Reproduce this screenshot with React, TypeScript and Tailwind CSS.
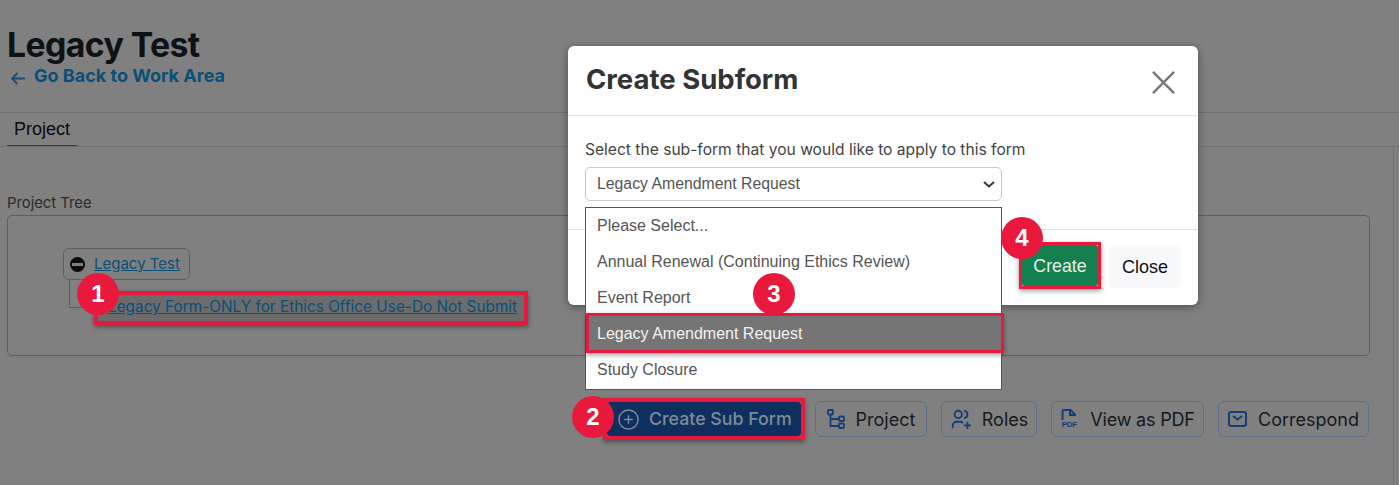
import { CirclePlus } from 'lucide-react';
import { TbUsersPlus } from 'react-icons/tb';
import type { ReactNode } from 'react';

const dm = "font-['Inter','Liberation_Sans',sans-serif]";
const arial = "font-['Liberation_Sans',Arial,sans-serif]";

function Badge({ n, className }: { n: number; className: string }) {
  return (
    <span className={`absolute z-30 flex h-[42px] w-[42px] items-center justify-center rounded-full bg-[#e8193c] text-[24px] font-bold text-white ${arial} ${className}`}>
      {n}
    </span>
  );
}

function ToolButton({ icon, label, className }: { icon: ReactNode; label: string; className: string }) {
  return (
    <button type="button" className={`flex h-[36px] items-center justify-center rounded-[6px] border border-[#5c6f86] text-[18px] text-[#15191f] ${className}`}>
      {icon}
      <span>{label}</span>
    </button>
  );
}

const TreeIcon = () => (
  <svg width="18" height="20" viewBox="0 0 18 20" fill="none" stroke="#123f78" strokeWidth="1.800">
    <rect x="1" y="1" width="5" height="4.500" rx="1" />
    <rect x="12" y="7.500" width="5" height="4.500" rx="1" />
    <rect x="12" y="14.500" width="5" height="4.500" rx="1" />
    <path d="M3.500 6v11h8.500M3.500 10h8.500" />
  </svg>
);

const PdfIcon = () => (
  <span className="flex h-[20px] w-[18px] flex-col items-center">
    <svg width="16" height="11" viewBox="0 0 16 11" fill="none" stroke="#123f78" strokeWidth="2">
      <path d="M1.500 11V2a1 1 0 0 1 1-1h7l4.500 4.500V7M9 1v5h5" />
    </svg>
    <span className={`text-[8px] leading-[9px] font-bold text-[#123f78] ${arial}`}>PDF</span>
  </span>
);

const MailIcon = () => (
  <svg width="19" height="16" viewBox="0 0 19 16" fill="none" stroke="#123f78" strokeWidth="2">
    <rect x="1" y="1" width="17" height="14" rx="2" />
    <path d="M5 5l4.500 3.500L14 5" />
  </svg>
);

export default function App() {
  const options = ['Please Select...', 'Annual Renewal (Continuing Ethics Review)', 'Event Report'];

  return (
    <div className={`relative h-[485px] w-[1399px] overflow-hidden bg-[#808080] ${dm}`}>
      <div className="pl-[7px] pt-[24px]">
        <h1 className="text-[33.800px] leading-[41px] font-bold tracking-[-0.6px] text-[#0d1217]">Legacy Test</h1>
        <a className="flex h-[22px] items-center gap-[8px] pb-[1px] pl-[3px] text-[18px] font-bold text-[#0a4f78]">
          <svg className="mt-[4px]" width="16" height="14" viewBox="0 0 16 14" fill="none" stroke="#1c4a7e" strokeWidth="1.800">
            <path d="M15 7.500H2M7.500 2L2 7.500 7.500 13" />
          </svg>
          Go Back to Work Area
        </a>
      </div>
      <div className="mt-[25px] border-t border-[#707070]">
        <div className="border-b border-[#707070] pl-[7px]">
          <div className={`h-[33px] w-[70px] border-b border-[#1d3f72] pl-[7px] text-[18px] leading-[32px] text-[#0a0a0a] ${arial}`}>Project</div>
        </div>
      </div>
      <div className="h-[339px] w-[1394px] border-r border-[#707070] pl-[7px] pr-[23px] pt-[46px]">
        <div className="text-[14.800px] leading-[20px] text-[#2c2c2c]">Project Tree</div>
        <div className="mt-[2px] h-[141px] rounded-[5px] border border-[#5f5f5f]">
          <div className="ml-[55px] mt-[32px] flex h-[32px] w-[127px] items-center gap-[9px] rounded-[6px] border border-[#5f5f5f] pl-[6px]">
            <span className="flex h-[15px] w-[15px] items-center justify-center rounded-full bg-[#0c0c0c]">
              <span className="h-[3px] w-[11px] bg-[#808080]" />
            </span>
            <a className="text-[15px] text-[#0a4f78] underline">Legacy Test</a>
          </div>
          <div className="ml-[61px] flex">
            <div className="h-[28px] w-[30px] border-b border-l border-[#5f5f5f]" />
            <div className="ml-[-5px] mt-[11px] flex h-[34px] w-[434px] items-center border-[4px] border-[#e8193c] bg-[#6c6c6c] pb-[3px] pl-[10px] shadow-[0_2px_5px_rgba(0,0,0,0.4)]">
              <a className="text-[15.350px] whitespace-nowrap text-[#0a4f78] underline">Legacy Form-ONLY for Ethics Office Use-Do Not Submit</a>
            </div>
          </div>
        </div>
        <div className="mr-[1px] mt-[42px] flex items-center justify-end gap-[14px]">
          <div className="mr-[-4px] border-[4px] border-[#e8193c] shadow-[0_2px_5px_rgba(0,0,0,0.4)]">
            <button type="button" className="flex h-[34px] w-[194px] items-center gap-[9px] rounded-[3px] bg-[#0f2f5f] pl-[10px] text-[17.800px] font-medium text-[#7f8a99]">
              <CirclePlus size={23} strokeWidth={1.500} color="#7f8a99" />
              Create Sub Form
            </button>
          </div>
          <ToolButton icon={<TreeIcon />} label="Project" className="w-[112px] gap-[11px]" />
          <ToolButton icon={<TbUsersPlus size={22} color="#123f78" />} label="Roles" className="w-[96px] gap-[10px]" />
          <ToolButton icon={<PdfIcon />} label="View as PDF" className="w-[153px] gap-[12px] tracking-[-0.2px]" />
          <ToolButton icon={<MailIcon />} label="Correspond" className="w-[151px] gap-[11px]" />
        </div>
      </div>
      <Badge n={1} className="left-[77px] top-[273px]" />
      <Badge n={2} className="left-[572px] top-[396px]" />

      {/* modal */}
      <div className="absolute left-[568px] top-[46px] z-10 h-[259px] w-[630px] rounded-[6px] bg-white shadow-[0_2px_8px_rgba(0,0,0,0.4)]">
        <div className="flex h-[70px] items-center justify-between border-b border-[#e5e5e5] pb-[2px] pl-[18px] pr-[23px]">
          <h2 className="text-[27.500px] font-bold text-[#333333]">Create Subform</h2>
          <svg className="mt-[5px]" width="23" height="23" viewBox="0 0 24 24" stroke="#777777" strokeWidth="2.500">
            <path d="M1 1l22 22M23 1L1 23" />
          </svg>
        </div>
        <div className="h-[113px] pl-[17px] pt-[24px]">
          <div className="text-[15.600px] leading-[20px] text-[#444444]">Select the sub-form that you would like to apply to this form</div>
          <div className={`mt-[7px] flex h-[34px] w-[417px] items-center justify-between rounded-[5px] border border-[#c9c9c9] pl-[11px] pr-[5px] text-[15.800px] text-[#555555] ${arial}`}>
            Legacy Amendment Request
            <svg width="14" height="14" viewBox="0 0 14 14" fill="none" stroke="#333333" strokeWidth="2">
              <path d="M2 5l5 4.500L12 5" />
            </svg>
          </div>
        </div>
        <div className="flex h-[76px] items-center justify-end gap-[8px] border-t border-[#dedede] pb-[4px] pr-[17px]">
          <div className="border-[3px] border-[#e8193c] shadow-[0_2px_5px_rgba(0,0,0,0.4)]">
            <button type="button" className={`block h-[41px] w-[76px] rounded-[2px] bg-[#15804f] pt-[1px] text-[17.800px] text-[#e6eee9] ${arial}`}>Create</button>
          </div>
          <button type="button" className={`mt-[3px] h-[42px] w-[72px] rounded-[5px] bg-[#f8f9fa] text-[18px] text-[#111111] ${arial}`}>Close</button>
        </div>
      </div>

      {/* native select list */}
      <div className={`absolute left-[585px] top-[207px] z-20 h-[183px] w-[417px] border border-[#555555] bg-white text-[16px] text-[#555555] ${arial}`}>
        {options.map((o) => (
          <div key={o} className="flex h-[36px] items-center pl-[11px]">{o}</div>
        ))}
        <div className="relative h-[36px]">
          <div className="absolute -right-[3px] -top-[3px] left-0 flex h-[40px] items-center border-[3px] border-[#e8193c] bg-[#757575] pl-[8px] pt-[2px] text-[#f2f2f2] shadow-[0_2px_5px_rgba(0,0,0,0.4)]">
            Legacy Amendment Request
          </div>
        </div>
        <div className="flex h-[36px] items-center pl-[11px]">Study Closure</div>
      </div>
      <Badge n={3} className="left-[753px] top-[273px]" />
      <Badge n={4} className="left-[1001px] top-[217px]" />
    </div>
  );
}
